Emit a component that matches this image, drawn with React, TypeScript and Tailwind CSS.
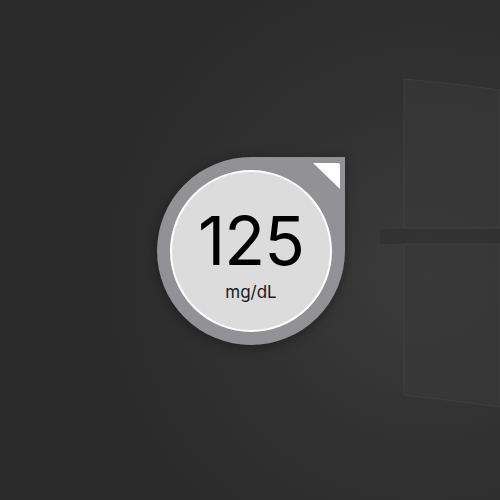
export default function App() {
  return (
    <div className="relative w-[500px] h-[500px] overflow-hidden bg-[radial-gradient(circle_at_85%_55%,#3c3c3c_0%,#313131_35%,#2a2a2a_70%)] flex items-center justify-center font-['Inter',sans-serif]">
      {/* faint window logo in the wallpaper */}
      <svg className="absolute inset-0" width="500" height="500" viewBox="0 0 500 500">
        <path d="M380 229 L500 229 L500 244 L380 244 Z" fill="#2c2c2c" opacity="0.5" />
        <path d="M404 79 Q450 83 500 90 L500 228 L404 228 Z" fill="#383838" opacity="0.7" stroke="#444444" strokeWidth="1" />
        <path d="M404 244 L500 244 L500 407 Q450 400 404 395 Z" fill="#383838" opacity="0.7" stroke="#444444" strokeWidth="1" />
      </svg>

      <div className="relative ml-[2px] mt-[2px] w-[188px] h-[188px] rounded-full rounded-tr-[5px] bg-[#919196] shadow-[0_2px_12px_rgba(0,0,0,0.35)] flex items-center justify-center">
        <svg className="absolute top-[6px] right-[5px]" width="27" height="26" viewBox="0 0 27 26">
          <path d="M0 0 L25 0 Q27 0 27 2 L27 26 Z" fill="#ffffff" />
        </svg>
        <div className="w-[162px] h-[162px] rounded-full border-2 border-white bg-[#dcdcdc] flex flex-col items-center justify-center">
          <span className="text-[67px] leading-none text-black tracking-[-1px] mt-[6px]">125</span>
          <span className="text-[17px] leading-none text-[#1a1a1a] mt-[10px]">mg/dL</span>
        </div>
      </div>
    </div>
  );
}
